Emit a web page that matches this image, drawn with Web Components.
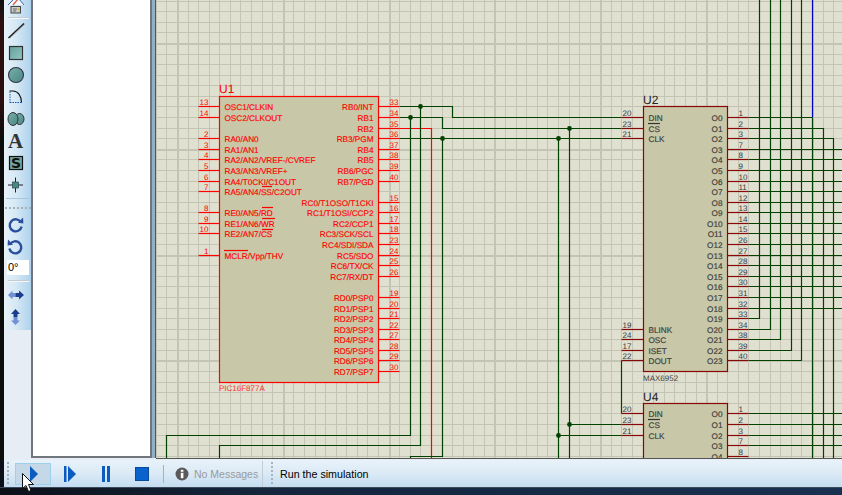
<!DOCTYPE html>
<html>
<head>
<meta charset="utf-8">
<title>Schematic capture</title>
<style>
  html, body { margin: 0; height: 100%; overflow: hidden; background: #10141c; }
</style>
</head>
<body>
<proteus-app></proteus-app>

<script>
// icons for the left toolbar, local box is 22x22
const ICONS = {
  line: `<path d="M3.5 18 L19 3.5" stroke="#222" stroke-width="1.6"/><path d="M5 18 L19.5 4.5" stroke="#999" stroke-width=".8"/>`,
  box: `<rect x="4.5" y="4.5" width="13" height="13" fill="url(#teal)" stroke="#333" stroke-width="1.2"/>`,
  circle: `<circle cx="11" cy="11" r="7.5" fill="url(#teal2)" stroke="#334" stroke-width="1.1"/>`,
  arc: `<path d="M5 17 V5" stroke="#1a55b0" stroke-dasharray="1.5 1" fill="none"/><path d="M5 16.5 H16.5" stroke="#1a55b0" stroke-dasharray="1.5 1" fill="none"/><path d="M4.5 5 H8 C13 5 16.5 10 16.5 16.5" stroke="#111" stroke-width="1.1" fill="none"/>`,
  blob: `<ellipse cx="14.5" cy="11" rx="4.5" ry="5.5" fill="url(#teal2)" stroke="#333"/><ellipse cx="8" cy="11" rx="5" ry="6.5" fill="url(#teal2)" stroke="#333"/>`,
  letter: `<text x="10.5" y="18" text-anchor="middle" font-family="Liberation Serif" font-weight="700" font-size="21" fill="#333">A</text>`,
  stamp: `<rect x="4.5" y="4.5" width="13" height="13" fill="#6fa5a2" stroke="#111" stroke-width="1.2"/><text x="11" y="16" text-anchor="middle" font-family="DejaVu Sans" font-weight="700" font-size="14" fill="#111">S</text>`,
  junction: `<path d="M10.5 3.5 V18.5 M3 11 H18" stroke="#222"/><rect x="7.5" y="8" width="6" height="6" fill="#3f8c8c" stroke="#333" stroke-width=".6"/>`,
  cw: `<path d="M16 8.5 A6 6 0 1 0 16.6 12.5" fill="none" stroke="#2a4f9f" stroke-width="2.4"/><path d="M13 8.8 L18.4 9.4 L18 3.6 Z" fill="#2a4f9f"/>`,
  ccw: `<path d="M5 8.5 A6 6 0 1 1 4.4 12.5" fill="none" stroke="#2a4f9f" stroke-width="2.4"/><path d="M8 8.8 L2.6 9.4 L3 3.6 Z" fill="#2a4f9f"/>`,
  fliph: `<path d="M3 11 L7.5 6.5 V9 H10.5 V13 H7.5 V15.5 Z" fill="#6f90d4"/><path d="M19 11 L14 6.5 V9 H10.5 V13 H14 V15.5 Z" fill="#1c3c8c"/>`,
  flipv: `<path d="M10.5 3 L6 8 H8.5 V11 H12.5 V8 H15 Z" fill="#1c3c8c"/><path d="M10.5 19 L6 14.5 H8.5 V11 H12.5 V14.5 H15 Z" fill="#6f90d4"/>`
}

class ToolIcon extends HTMLElement {
  constructor() {
    super()
    this.attachShadow({ mode: "open" })
    const name = this.getAttribute("name")
    this.shadowRoot.innerHTML = `
    <style>
      :host { display: block; width: 22px; height: 22px; }
      svg { display: block; }
    </style>
    <svg width="22" height="22" viewBox="0 0 22 22">
      <defs>
        <linearGradient id="teal" x1="0" y1="0" x2="1" y2="1"><stop offset="0" stop-color="#64a09e"/><stop offset="1" stop-color="#94c6c2"/></linearGradient>
        <linearGradient id="teal2" x1="0" y1="0" x2="1" y2="1"><stop offset="0" stop-color="#76b0ac"/><stop offset="1" stop-color="#4a8684"/></linearGradient>
      </defs>
      ${ICONS[name]}
    </svg>`
  }
}
customElements.define("tool-icon", ToolIcon)

class SideToolbar extends HTMLElement {
  constructor() {
    super()
    this.attachShadow({ mode: "open" })
    this.shadowRoot.innerHTML = `
    <style>
      :host { display: block; width: 27px; background: #e6edf4; flex: none; }
      #strip {
        height: 330px; box-sizing: border-box; padding-left: 1px;
        background: linear-gradient(90deg, #e8f2f9, #d5e8f5 45%, #aed2ec);
        display: flex; flex-direction: column;
      }
      #print { display: block; height: 14px; }
      .sep { height: 1px; width: 21px; margin: 3px 0 2px 3px; background: #c4ccd2; box-shadow: 0 1px 0 #f4f8fb; flex: none; }
      .sep.blue { background: #a8c6de; box-shadow: none; margin: 2px 0 8px 1px; width: 24px; }
      .grip { height: 2px; margin: 0 0 5px 0; flex: none;
        background: repeating-linear-gradient(90deg, #a6b0ba 0 2px, transparent 2px 4px); }
      #angle {
        width: 22px; height: 15px; margin: 2px 0 0 2px; background: #fff; box-sizing: border-box;
        font: 11px "Liberation Sans", sans-serif; color: #000; padding: 0 0 0 1px; line-height: 15px; flex: none;
      }
      .sep.low { margin: 5px 0 3px 3px; }
    </style>
    <div id="strip">
      <svg id="print" width="22" height="14" viewBox="0 0 22 14">
        <path d="M3 5 L9 -1 H14 L19 5" fill="#f4f8fc" stroke="#3a66b0"/>
        <path d="M8 5 L13 -1" stroke="#e0502a" stroke-width="1.2"/>
        <rect x="6" y="6.5" width="9.5" height="6.5" fill="#c8ccc8" stroke="#444"/>
        <path d="M8 9 H12 M8 11 H11" stroke="#666"/>
        <rect x="13" y="8.5" width="1.5" height="1.5" fill="#c8b020"/>
      </svg>
      <div class="sep"></div>
      <tool-icon name="line"></tool-icon>
      <tool-icon name="box"></tool-icon>
      <tool-icon name="circle"></tool-icon>
      <tool-icon name="arc"></tool-icon>
      <tool-icon name="blob"></tool-icon>
      <tool-icon name="letter"></tool-icon>
      <tool-icon name="stamp"></tool-icon>
      <tool-icon name="junction"></tool-icon>
      <div class="sep blue"></div>
      <div class="grip"></div>
      <tool-icon name="cw"></tool-icon>
      <tool-icon name="ccw"></tool-icon>
      <div id="angle">0°</div>
      <div class="sep low"></div>
      <tool-icon name="fliph"></tool-icon>
      <tool-icon name="flipv"></tool-icon>
    </div>`
  }
}
customElements.define("side-toolbar", SideToolbar)

class PartsPanel extends HTMLElement {
  constructor() {
    super()
    this.attachShadow({ mode: "open" })
    this.shadowRoot.innerHTML = `
    <style>
      :host {
        display: block; flex: none; width: 121px; box-sizing: border-box; background: #fff;
        border-left: 2px solid #70767c; border-right: 2px solid #70767c; border-bottom: 2px solid #70767c;
      }
    </style>`
  }
}
customElements.define("parts-panel", PartsPanel)

// snap to the sheet grid, which is 10.583px a step
const gx = i => Math.floor(177.5 + 10.583 * i) + 0.5
const gy = j => Math.floor(43.5 + 10.583 * j) + 0.5

const GREEN = "#004000", RED = "#ff0000", DARKRED = "#860808", INK = "#3a3a3a"

class SchematicSheet extends HTMLElement {
  constructor() {
    super()
    this.attachShadow({ mode: "open" })
    this.shadowRoot.innerHTML = `
    <style>
      :host { display: block; flex: 1; min-width: 0; height: 458px; background: #e0e0d0; overflow: hidden; border-bottom: 1px solid #555; }
      svg { display: block; }
      text { font-family: "Liberation Sans", sans-serif; text-rendering: geometricPrecision; }
      .lbl { stroke-width: .15; }
      line, polyline { stroke-width: 1.2; }
      .chip { stroke-width: 1.2; }
      .grid { shape-rendering: crispEdges; }
    </style>
    <svg width="686" height="458" viewBox="156 0 686 458">${this.draw()}</svg>`
  }

  wire(points, color = GREEN) {
    return `<polyline fill="none" stroke="${color}" points="${points.map(p => p[0] + "," + p[1]).join(" ")}"/>`
  }

  dot(i, j) {
    return `<circle cx="${gx(i)}" cy="${gy(j)}" r="2.4" fill="${GREEN}"/>`
  }

  // side -1 pins stick out to the left, side 1 to the right
  pin(edge, j, side, num, label, color, ink) {
    const y = gy(j)
    const x0 = gx(edge), x1 = gx(edge + side * 2)
    let s = `<line x1="${x0}" y1="${y}" x2="${x1}" y2="${y}" stroke="${color}"/>`
    const nx = side < 0 ? x1 + 10 : x0 + 11
    s += `<text x="${nx}" y="${y - 2}" font-size="8" fill="${ink}" text-anchor="${side < 0 ? "end" : "start"}">${num}</text>`
    const lx = side < 0 ? x0 + 5 : x0 - 5
    s += `<text class="lbl" stroke="${ink}" x="${lx}" y="${y + 3}" font-size="8.2" fill="${ink}" text-anchor="${side < 0 ? "start" : "end"}">${label}</text>`
    return s
  }

  chip(i0, j0, i1, j1, color) {
    return `<rect class="chip" x="${gx(i0)}" y="${gy(j0)}" width="${gx(i1) - gx(i0)}" height="${gy(j1) - gy(j0)}" fill="#c8c8a8" stroke="${color}"/>`
  }

  grid() {
    let s = ""
    for (let i = -2; i <= 63; i++) {
      const major = (i % 10 + 10) % 10 == 0
      s += `<rect class="grid" x="${gx(i) - (major ? 1 : 0.5)}" y="0" width="${major ? 2 : 1}" height="458" fill="#c4c4b4"/>`
    }
    for (let j = -4; j <= 39; j++) {
      const major = (j % 10 + 10) % 10 == 0
      s += `<rect class="grid" x="156" y="${gy(j) - (major ? 1 : 0.5)}" width="686" height="${major ? 2 : 1}" fill="#c4c4b4"/>`
    }
    return s
  }

  wires() {
    const bottom = 458
    let s = ""
    // U1 port B to U2 and on down the sheet
    s += this.wire([[gx(21), gy(6)], [gx(26), gy(6)], [gx(26), gy(7)], [gx(42), gy(7)]])
    s += this.wire([[gx(21), gy(7)], [gx(25), gy(7)], [gx(25), gy(8)], [gx(42), gy(8)]])
    s += this.wire([[gx(21), gy(9)], [gx(42), gy(9)]])
    s += this.wire([[gx(21), gy(8)], [gx(24), gy(8)], [gx(24), bottom]], RED)
    s += this.wire([[gx(22), gy(7)], [gx(22), gy(37)], [gx(-1), gy(37)], [gx(-1), bottom]])
    s += this.wire([[gx(23), gy(6)], [gx(23), gy(38)], [gx(4), gy(38)], [gx(4), bottom]])
    s += this.wire([[gx(25), gy(9)], [gx(25), gy(39)], [gx(22), gy(39)], [gx(22), bottom]])
    // clock and chip select down to U4
    s += this.wire([[gx(36), gy(9)], [gx(36), bottom]])
    s += this.wire([[gx(37), gy(8)], [gx(37), bottom]])
    s += this.wire([[gx(37), gy(36)], [gx(42), gy(36)]])
    s += this.wire([[gx(36), gy(37)], [gx(42), gy(37)]])
    s += this.wire([[gx(42), gy(30)], [gx(42), gy(35)]])
    // U2 outputs
    for (let j = 10; j <= 25; j++) s += this.wire([[gx(54), gy(j)], [842, gy(j)]])
    for (let n = 0; n < 5; n++) s += this.wire([[gx(54), gy(26 + n)], [gx(55 + n), gy(26 + n)], [gx(55 + n), 0]])
    s += this.wire([[gx(54), gy(7)], [gx(60), gy(7)]])
    s += this.wire([[gx(60), 0], [gx(60), gy(7)]], "#0000c0")
    s += this.wire([[gx(60), gy(7)], [gx(60), bottom]])
    s += this.wire([[gx(54), gy(8)], [gx(61), gy(8)], [gx(61), bottom]])
    s += this.wire([[gx(54), gy(9)], [gx(62), gy(9)], [gx(62), bottom]])
    // U4 outputs
    for (let j = 35; j <= 38; j++) s += this.wire([[gx(54), gy(j)], [842, gy(j)]])
    return s
  }

  draw() {
    let s = this.grid() + this.wires()
    const u1Left = [[6, 13, "OSC1/CLKIN"], [7, 14, "OSC2/CLKOUT"], [9, 2, "RA0/AN0"], [10, 3, "RA1/AN1"], [11, 4, "RA2/AN2/VREF-/CVREF"], [12, 5, "RA3/AN3/VREF+"], [13, 6, "RA4/T0CKI/C1OUT"], [14, 7, "RA5/AN4/SS/C2OUT"], [16, 8, "RE0/AN5/RD"], [17, 9, "RE1/AN6/WR"], [18, 10, "RE2/AN7/CS"], [20, 1, "MCLR/Vpp/THV"]]
    const u1Right = [[6, 33, "RB0/INT"], [7, 34, "RB1"], [8, 35, "RB2"], [9, 36, "RB3/PGM"], [10, 37, "RB4"], [11, 38, "RB5"], [12, 39, "RB6/PGC"], [13, 40, "RB7/PGD"], [15, 15, "RC0/T1OSO/T1CKI"], [16, 16, "RC1/T1OSI/CCP2"], [17, 17, "RC2/CCP1"], [18, 18, "RC3/SCK/SCL"], [19, 23, "RC4/SDI/SDA"], [20, 24, "RC5/SDO"], [21, 25, "RC6/TX/CK"], [22, 26, "RC7/RX/DT"], [24, 19, "RD0/PSP0"], [25, 20, "RD1/PSP1"], [26, 21, "RD2/PSP2"], [27, 22, "RD3/PSP3"], [28, 27, "RD4/PSP4"], [29, 28, "RD5/PSP5"], [30, 29, "RD6/PSP6"], [31, 30, "RD7/PSP7"]]
    // U1
    s += this.chip(4, 5, 19, 32, RED)
    u1Left.forEach(p => s += this.pin(4, p[0], -1, p[1], p[2], RED, RED))
    u1Right.forEach(p => s += this.pin(19, p[0], 1, p[1], p[2], RED, RED))
    s += `<text x="219" y="92.5" font-size="12" fill="${RED}">U1</text>`
    s += `<text x="219" y="391" font-size="8" fill="#ff3030">PIC16F877A</text>`
    // overbars on the active low pins of U1
    const bars = [[262, 272, 186], [262, 273, 207], [262, 275, 218], [262, 273, 229], [224, 248, 250]]
    bars.forEach(b => s += `<line x1="${b[0]}" y1="${b[2] + .5}" x2="${b[1]}" y2="${b[2] + .5}" stroke="${RED}"/>`)

    // U2
    const outNums = [1, 2, 3, 7, 8, 9, 10, 11, 12, 13, 14, 15, 26, 27, 28, 29, 30, 31, 32, 33, 34, 38, 39, 40]
    s += this.chip(44, 6, 52, 31, DARKRED)
    ;[[7, 20, "DIN"], [8, 23, "CS"], [9, 21, "CLK"], [27, 19, "BLINK"], [28, 24, "OSC"], [29, 17, "ISET"], [30, 22, "DOUT"]]
      .forEach(p => s += this.pin(44, p[0], -1, p[1], p[2], DARKRED, INK))
    outNums.forEach((n, k) => s += this.pin(52, 7 + k, 1, n, "O" + k, DARKRED, INK))
    s += `<text x="643" y="103.5" font-size="12" fill="#222">U2</text>`
    s += `<text x="643" y="381" font-size="8" fill="#444">MAX6952</text>`
    s += `<line x1="648" y1="123.5" x2="660" y2="123.5" stroke="#333"/>`

    // U4, runs off under the status bar
    s += this.chip(44, 34, 52, 44, DARKRED)
    ;[[35, 20, "DIN"], [36, 23, "CS"], [37, 21, "CLK"]]
      .forEach(p => s += this.pin(44, p[0], -1, p[1], p[2], DARKRED, INK))
    ;[1, 2, 3, 7, 8].forEach((n, k) => s += this.pin(52, 35 + k, 1, n, "O" + k, DARKRED, INK))
    s += `<text x="643" y="400.5" font-size="12" fill="#222">U4</text>`
    s += `<line x1="648" y1="419.5" x2="660" y2="419.5" stroke="#333"/>`

    // junctions
    ;[[23, 6], [22, 7], [25, 9], [37, 8], [36, 9], [37, 36], [36, 37]].forEach(d => s += this.dot(d[0], d[1]))
    return s
  }
}
customElements.define("schematic-sheet", SchematicSheet)

class SimBar extends HTMLElement {
  constructor() {
    super()
    this.attachShadow({ mode: "open" })
    this.shadowRoot.innerHTML = `
    <style>
      :host {
        display: flex; align-items: center; height: 27px; margin-left: 4px;
        background: linear-gradient(180deg, #e8f2fa, #dbeaf6 50%, #c4dcf0);
        font: 10.7px "Liberation Sans", sans-serif; color: #000; position: relative;
      }
      .grip { width: 2px; height: 24px; flex: none; background: repeating-linear-gradient(180deg, #a8b2bc 0 2px, transparent 2px 4px); }
      #controls { display: flex; align-items: center; gap: 0; margin-left: 6px; }
      .btn { width: 36px; height: 22px; box-sizing: border-box; display: flex; align-items: center; justify-content: center; flex: none; }
      .btn.hot { background: #c4d8e8; border: 1px solid #9ed0ee; }
      svg { display: block; }
      .sep { width: 1px; height: 18px; background: #a8b0b8; flex: none; }
      #msg { display: flex; align-items: center; gap: 5px; color: #9a9a9a; font-size: 10.5px; margin-left: 11px; white-space: nowrap; width: 87px; flex: none; }
      .edge { width: 1px; height: 26px; background: #c0ccd6; flex: none; }
      #status { margin-left: 7px; white-space: nowrap; }
    </style>
    <div class="grip" style="margin-left:3px"></div>
    <div id="controls">
      <div class="btn hot" style="margin-right:1px"><svg width="10" height="16" viewBox="0 0 10 16" style="margin-left:1px"><path d="M1 0 L9 8 L1 16 Z" fill="#0a5cc0"/></svg></div>
      <div class="btn"><svg width="14" height="16" viewBox="0 0 14 16"><path d="M1 0 H3.5 V16 H1 Z M5 0 L13 8 L5 16 Z" fill="#0a5cc0"/></svg></div>
      <div class="btn"><svg width="10" height="16" viewBox="0 0 10 16"><path d="M1 0 H4 V16 H1 Z M6 0 H9 V16 H6 Z" fill="#0a5cc0"/></svg></div>
      <div class="btn" style="margin-right:3px"><svg width="14" height="14" viewBox="0 0 14 14"><rect x=".5" y=".5" width="13" height="13" fill="#0a62cc" stroke="#0a4a9c"/></svg></div>
    </div>
    <div class="sep"></div>
    <div id="msg">
      <svg width="14" height="14" viewBox="0 0 14 14"><circle cx="7" cy="7" r="6.5" fill="#5a5a5a"/><rect x="5.8" y="5.8" width="2.6" height="5.4" fill="#fff"/><rect x="5.8" y="2.8" width="2.6" height="2" fill="#fff"/></svg>
      <span>No Messages</span>
    </div>
    <div class="edge"></div>
    <div class="grip" style="margin-left:8px"></div>
    <div id="status">Run the simulation</div>`
  }
}
customElements.define("sim-bar", SimBar)

class ProteusApp extends HTMLElement {
  constructor() {
    super()
    this.attachShadow({ mode: "open" })
    this.shadowRoot.innerHTML = `
    <style>
      :host { display: block; width: 842px; height: 495px; position: relative; overflow: hidden; background: #0c1018; }
      #main { display: flex; height: 460px; background: linear-gradient(180deg, #101010, #2c0e0e 5%, #2c0e0e 22%, #0c0c0c 30%); padding-left: 4px; box-sizing: border-box; }
      #work { display: flex; flex: 1; min-width: 0; height: 460px; background: #e6edf4; }
      #split { width: 4px; flex: none; height: 458px; background: #8fb0c6; border-right: 1px solid #50565c; box-sizing: border-box; }
      parts-panel { height: 458px; }
      #taskbar { height: 8px; background: linear-gradient(90deg, #0c1018, #14253c 30%, #1a3050); border-top: 1px solid #3a4a5a; }
      #cursor { position: absolute; left: 22px; top: 473px; }
    </style>
    <div id="main">
      <div id="work">
        <side-toolbar></side-toolbar>
        <parts-panel></parts-panel>
        <div id="split"></div>
        <schematic-sheet></schematic-sheet>
      </div>
    </div>
    <sim-bar></sim-bar>
    <div id="taskbar"></div>
    <svg id="cursor" width="13" height="20" viewBox="0 0 13 20"><path d="M.5 .5 V15.5 L4 12.5 L6.5 18.5 L9 17.5 L6.5 11.5 H11.5 Z" fill="#fff" stroke="#111"/></svg>`
  }
}
customElements.define("proteus-app", ProteusApp)
</script>
</body>
</html>
